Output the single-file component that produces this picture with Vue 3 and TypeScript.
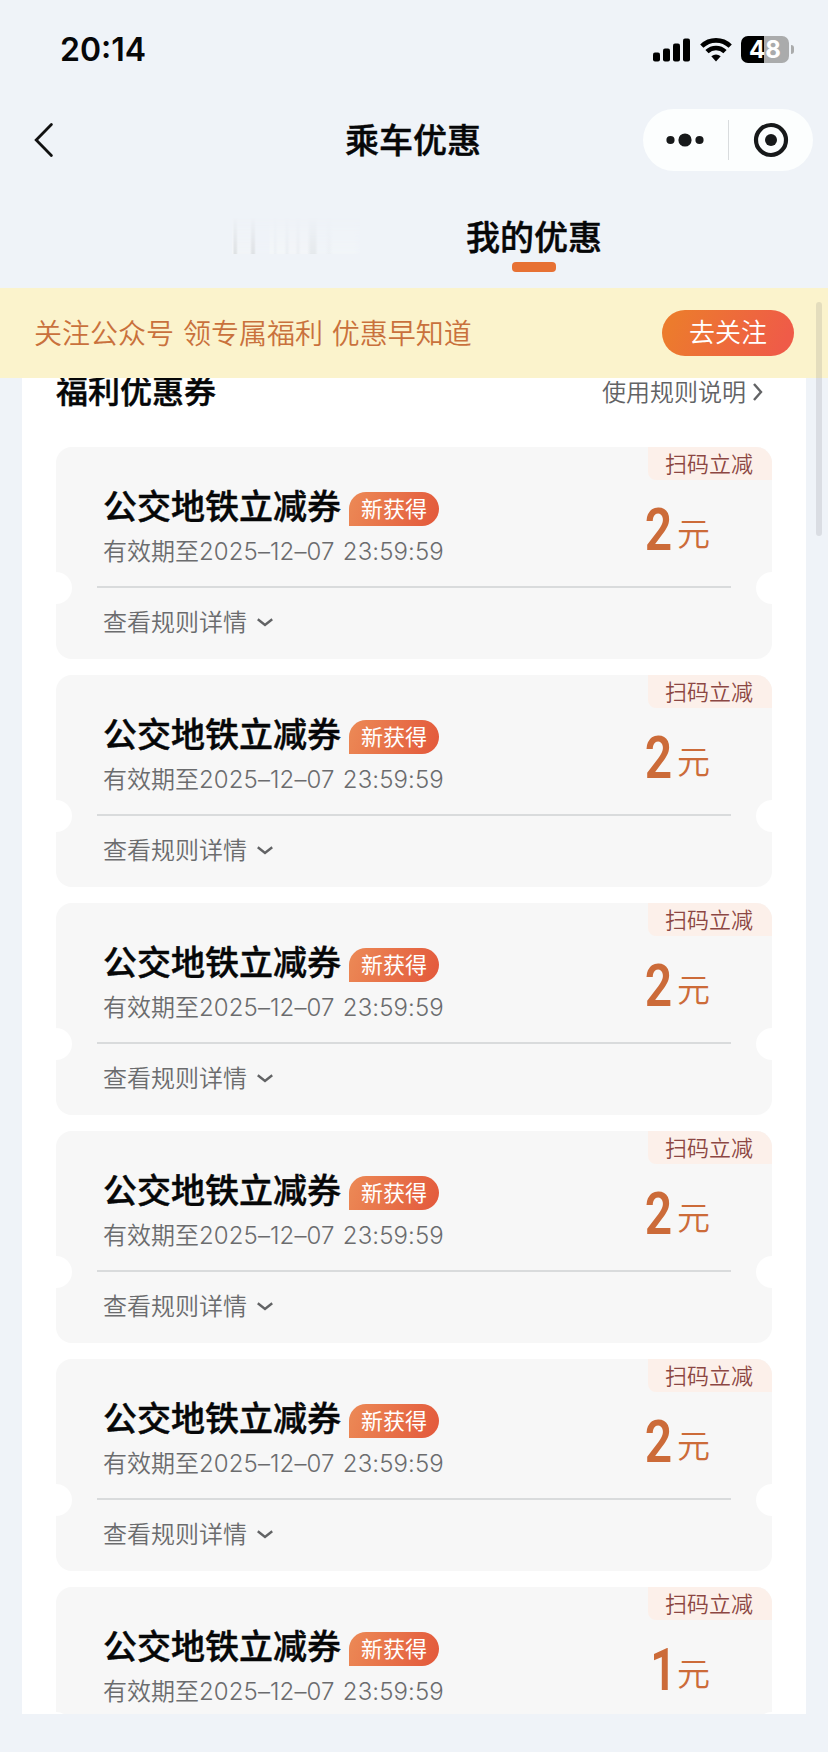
<script setup lang="ts">
interface Coupon {
  id: number
  title: string
  expires: string
  amount: number
}

const expires = '2025–12–07 23:59:59'
const coupons: Coupon[] = [2, 2, 2, 2, 2, 1].map((amount, id) => ({
  id,
  title: '公交地铁立减券',
  expires,
  amount,
}))
</script>

<template>
  <div class="screen">
    <header class="status">
      <span class="clock">20:14</span>
      <div class="status-icons">
        <svg class="signal" width="38" height="24" viewBox="0 0 38 24">
          <rect x="0" y="14.4" width="7" height="9" rx="2" />
          <rect x="10" y="10.4" width="7" height="13" rx="2" />
          <rect x="20" y="5.4" width="7" height="18" rx="2" />
          <rect x="30" y="0.4" width="7" height="23" rx="2" />
        </svg>
        <svg class="wifi" width="32" height="24" viewBox="0 0 32 24">
          <path d="M1.8 8.2a20.3 20.3 0 0 1 28.4 0" />
          <path d="M7 13.6a12.9 12.9 0 0 1 18 0" />
          <path class="wifi-dot" d="M11.3 18.3q4.7-3.6 9.4 0L16 23.4z" />
        </svg>
        <div class="battery"><span>48</span></div>
        <i class="nub"></i>
      </div>
    </header>

    <nav class="navbar">
      <svg class="back" width="20" height="36" viewBox="0 0 20 36">
        <path d="M17.4 2.6 2.2 18l15.2 15.4" />
      </svg>
      <h1>乘车优惠</h1>
      <div class="capsule">
        <svg class="more" width="40" height="16" viewBox="0 0 40 16">
          <circle cx="5.5" cy="8" r="4.1" />
          <circle cx="20" cy="8" r="6.6" />
          <circle cx="34.5" cy="8" r="4.1" />
        </svg>
        <i class="split"></i>
        <svg class="target" width="36" height="36" viewBox="0 0 36 36">
          <circle class="ring" cx="18" cy="18" r="15" />
          <circle cx="18" cy="18" r="6" />
        </svg>
      </div>
    </nav>

    <div class="tabs">
      <div class="tab-faded"></div>
      <div class="tab-active">我的优惠</div>
    </div>

    <section class="banner">
      <p>关注公众号 领专属福利 优惠早知道</p>
      <button class="follow">去关注</button>
    </section>

    <main class="panel">
      <div class="panel-head">
        <h2>福利优惠券</h2>
        <a class="rules">使用规则说明
          <svg width="12" height="20" viewBox="0 0 12 20"><path d="M2 2l7 8-7 8" /></svg>
        </a>
      </div>
      <article v-for="c in coupons" :key="c.id" class="coupon">
        <span class="tag">扫码立减</span>
        <div class="upper">
          <div class="info">
            <div class="title-row">
              <h3>{{ c.title }}</h3>
              <span class="badge">新获得</span>
            </div>
            <p class="date">有效期至<span>{{ c.expires }}</span></p>
          </div>
          <div class="price" :class="{ one: c.amount === 1 }"><b>{{ c.amount }}</b><span>元</span></div>
        </div>
        <div class="details">查看规则详情
          <svg width="18" height="12" viewBox="0 0 18 12"><path d="M1.8 3.2 9 9l7.2-5.8" /></svg>
        </div>
      </article>
    </main>
    <i class="scrollbar"></i>
  </div>
</template>

<style>
body {
  background: #eff3f8;
}
</style>

<style scoped>
* {
  box-sizing: border-box;
}
h1, h2, h3, p {
  margin: 0;
  font-weight: 500;
}
h1, h2, h3, .tab-active {
  -webkit-text-stroke: 0.45px currentColor;
}
svg {
  display: block;
  flex: none;
}
.screen {
  position: relative;
  width: 828px;
  height: 1752px;
  overflow: hidden;
  background: #eff3f8;
  font-family: Inter, "Noto Sans CJK SC", sans-serif;
  font-weight: 350;
  color: #060708;
  white-space: nowrap;
}
.status {
  display: flex;
  justify-content: space-between;
  height: 100px;
  padding: 36px 34px 0 60px;
}
.clock {
  font-size: 32px;
  line-height: 28px;
  font-weight: 600;
}
.status-icons {
  display: flex;
  align-items: center;
  height: 27px;
}
.signal {
  margin-right: 9px;
}
.wifi {
  margin-right: 9px;
}
.wifi path {
  fill: none;
  stroke: #000;
  stroke-width: 4.6;
}
.wifi .wifi-dot {
  fill: #000;
  stroke: none;
}
.battery {
  width: 48px;
  height: 27px;
  border-radius: 7px;
  background: linear-gradient(90deg, #000 48%, #aaabac 48%);
  color: #fff;
  font-size: 24px;
  font-weight: 650;
  line-height: 27px;
  text-align: center;
}
.nub {
  width: 3px;
  height: 9px;
  margin-left: 2px;
  border-radius: 0 4px 4px 0;
  background: #aaabac;
}
.navbar {
  display: grid;
  grid-template-columns: 1fr auto 1fr;
  align-items: center;
  height: 80px;
  padding: 0 15px 0 34px;
}
.back path {
  fill: none;
  stroke: #111;
  stroke-width: 2.8;
  stroke-linecap: round;
}
h1 {
  margin: 1px 21px 0 0;
  font-size: 34px;
  line-height: 40px;
}
.capsule {
  display: flex;
  align-items: center;
  justify-self: end;
  width: 170px;
  height: 62px;
  padding-left: 22px;
  border-radius: 32px;
  background: #fcfefe;
}
.capsule svg {
  fill: #17191a;
}
.split {
  width: 1px;
  height: 40px;
  margin: 0 24px 0 22.5px;
  background: #d9dcde;
}
.capsule .ring {
  fill: none;
  stroke: #17191a;
  stroke-width: 4.2;
}
.tabs {
  display: flex;
  height: 107.5px;
  padding: 37px 0 0 232px;
}
.tab-faded {
  width: 128px;
  height: 37px;
  margin-right: 106px;
  background: linear-gradient(90deg, #f3f5f7 0 1px, #dfe2e4 2px 4px, #f1f4f7 6px 18px, #dfe2e5 20px 22px, #eff3f8 24px 37px, #f3f6f8 38px 41px, #ecf0f4 43px, #f3f6f8 46px 52px, #eaeef2 55px, #f3f5f8 58px 63px, #ebeef2 66px, #f3f5f8 69px 75px, #e5e9ec 79px 83px, #f0f4f8 86px 93px, #ecf0f4 97px, #f1f5f8 101px 122px, #eff3f8);
  mask-image: linear-gradient(transparent, #000);
}
.tab-active {
  height: 56px;
  font-size: 34px;
  line-height: 41px;
  font-weight: 500;
}
.tab-active::after {
  content: "";
  display: block;
  width: 44px;
  height: 10px;
  margin: 4px auto 0;
  border-radius: 4px;
  background: #e77134;
}
.banner {
  position: relative;
  display: flex;
  align-items: center;
  justify-content: space-between;
  height: 90.5px;
  padding: 0 34px;
  background: #fbf3cc;
}
.banner p {
  margin-top: -2px;
  font-size: 28px;
  font-weight: 350;
  color: #c9713c;
  word-spacing: 1px;
}
.follow {
  width: 132px;
  height: 46px;
  padding: 0;
  border: 0;
  border-radius: 23px;
  background: linear-gradient(115deg, #ec7b2d 10%, #ef5b48 90%);
  color: #fff;
  font: 350 26px/46px Inter, "Noto Sans CJK SC", sans-serif;
}
.panel {
  display: flex;
  flex-direction: column;
  gap: 16.5px;
  width: 784px;
  height: 1336px;
  margin-left: 22px;
  padding: 0 34px;
  overflow: hidden;
  background: #fff;
}
.panel-head {
  display: flex;
  justify-content: space-between;
  flex: none;
  height: 52.5px;
  padding-right: 8px;
}
h2 {
  height: 30px;
  margin-top: -6px;
  font-size: 32px;
  line-height: 40px;
}
.rules {
  display: flex;
  align-items: center;
  gap: 6px;
  height: 24px;
  font-size: 24px;
  color: #626365;
}
.rules svg {
  margin-top: 4px;
}
.rules path, .details path {
  fill: none;
  stroke: #626365;
  stroke-width: 2.4;
}
.coupon {
  position: relative;
  flex: none;
  height: 211.5px;
  border-radius: 16px;
  background:
    radial-gradient(circle at 0 141px, #fff 15.5px, transparent 16.5px),
    radial-gradient(circle at 100% 141px, #fff 15.5px, transparent 16.5px),
    #f7f7f7;
}
.tag {
  position: absolute;
  top: 0;
  right: 0;
  width: 124px;
  height: 33px;
  padding-left: 17px;
  border-radius: 0 16px 0 8px;
  background: #fcf0ea;
  color: #8c4743;
  font-size: 22px;
  line-height: 35px;
}
.upper {
  display: flex;
  justify-content: space-between;
  height: 141px;
  margin: 0 41px;
  padding: 40px 21px 0 6px;
  border-bottom: 2px solid #d9dbdc;
}
.title-row {
  display: flex;
  align-items: center;
  height: 39px;
}
h3 {
  font-size: 34px;
  line-height: 40px;
}
.badge {
  width: 90px;
  height: 34px;
  margin: 4px 0 0 8px;
  border-radius: 17px 17px 17px 0;
  background: linear-gradient(110deg, #ec8a56, #e3583b);
  color: #fff;
  font-size: 22px;
  font-weight: 400;
  line-height: 34px;
  text-align: center;
}
.date {
  margin-top: 9px;
  font-size: 24px;
  line-height: 34px;
  font-weight: 350;
  color: #6b6c6e;
}
.date span {
  letter-spacing: 0.1px;
  word-spacing: 1.5px;
}
.price {
  display: flex;
  align-items: baseline;
  height: 70px;
  margin-top: 8px;
  color: #cc6b39;
}
.price b {
  font: 600 60px/70px Roboto, sans-serif;
  transform: translateX(-1px) scaleX(0.8);
  transform-origin: right;
}
.price.one b {
  transform: translateX(3px) scaleX(0.76);
}
.price span {
  position: relative;
  top: -4px;
  margin-left: 4px;
  font-size: 33px;
  line-height: 40px;
}
.details {
  display: flex;
  align-items: center;
  gap: 9px;
  height: 65px;
  padding-left: 47px;
  font-size: 24px;
  color: #6b6c6e;
}
.details svg {
  margin-top: 3px;
}
.scrollbar {
  position: absolute;
  top: 302px;
  right: 6px;
  width: 6px;
  height: 234px;
  border-radius: 3px;
  background: rgba(90, 95, 100, 0.14);
}
</style>
